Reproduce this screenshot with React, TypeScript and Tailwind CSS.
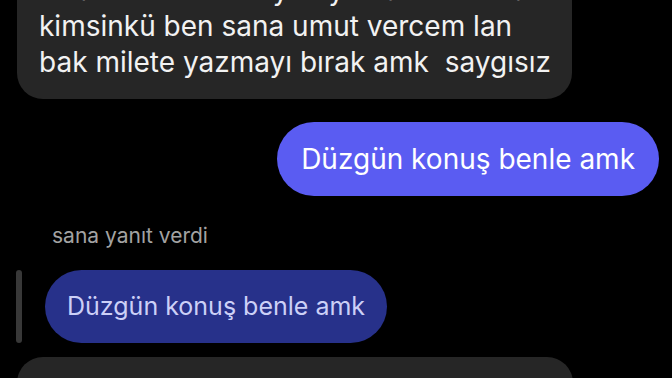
import React from 'react'

const font = { fontFamily: 'Inter, "Noto Sans", sans-serif' }

export default function App() {
  return (
    <div
      className="w-[672px] h-[378px] overflow-hidden bg-black text-white flex flex-col"
      style={font}
    >
      {/* incoming message, scrolled partly out of view */}
      <div className="shrink-0 ml-[17px] -mt-[40px] w-[555px] rounded-[26px] bg-[#262626] pl-[22px] pr-4 pt-3 pb-[19px] text-[28px] leading-[36px] text-[#f2f2f2]">
        <p>Ona sen kimsin diyen yok amk ne ulan</p>
        <p>kimsinkü ben sana umut vercem lan</p>
        <p>bak milete yazmayı bırak amk&nbsp; saygısız</p>
      </div>

      {/* outgoing */}
      <div className="shrink-0 mt-[23px] mr-[13px] self-end h-[74px] flex items-center rounded-full bg-[#5a5cf2] px-6 text-[28px] text-white">
        Düzgün konuş benle amk
      </div>

      {/* reply */}
      <p className="shrink-0 mt-[28px] ml-[52px] text-[21px] leading-[24px] text-[#a3a3a3]">sana yanıt verdi</p>
      <div className="shrink-0 mt-[22px] flex items-stretch gap-[23px] ml-[16px]">
        <div className="w-[6px] rounded-full bg-[#383838]" />
        <div className="h-[73px] flex items-center rounded-full bg-[#27318a] px-[22px] text-[25px] text-[#ccd0f7]">
          Düzgün konuş benle amk
        </div>
      </div>

      <div className="mt-[14px] ml-[17px] w-[556px] h-[80px] shrink-0 rounded-[26px] bg-[#262626]" />
    </div>
  )
}
